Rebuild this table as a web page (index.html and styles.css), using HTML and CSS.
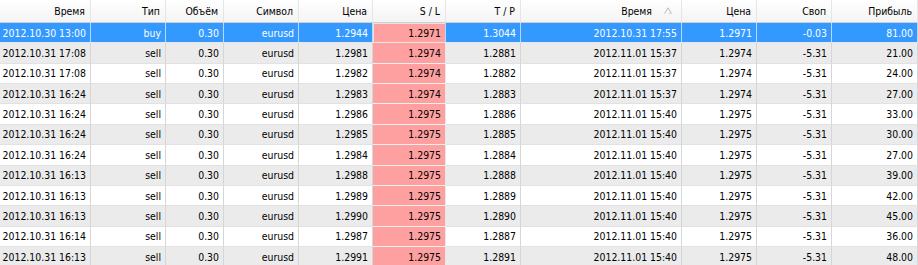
FILE: index.html
```html
<!DOCTYPE html>
<html lang="ru">
<head>
<meta charset="utf-8">
<title>Trades</title>
<link rel="stylesheet" href="styles.css">
</head>
<body>
<div class="table">
  <div class="row head">
    <div class="cell">Время</div>
    <div class="cell">Тип</div>
    <div class="cell">Объём</div>
    <div class="cell">Символ</div>
    <div class="cell">Цена</div>
    <div class="cell">S / L</div>
    <div class="cell">T / P</div>
    <div class="cell sorted">Время<svg class="sort" width="8" height="7" viewBox="0 0 8 7"><polyline points="0.5,6.5 4,0.8 7.5,6.5" fill="none" stroke="#b8b8b8" stroke-width="1"/><line x1="4.5" y1="6.5" x2="7.5" y2="6.5" stroke="#d8d8d8" stroke-width="1"/></svg></div>
    <div class="cell">Цена</div>
    <div class="cell">Своп</div>
    <div class="cell">Прибыль</div>
  </div>
  <div class="row selected">
    <div class="cell">2012.10.30 13:00</div><div class="cell">buy</div><div class="cell">0.30</div><div class="cell">eurusd</div><div class="cell">1.2944</div><div class="cell sl">1.2971</div><div class="cell">1.3044</div><div class="cell">2012.10.31 17:55</div><div class="cell">1.2971</div><div class="cell">-0.03</div><div class="cell">81.00</div>
  </div>
  <div class="row alt">
    <div class="cell">2012.10.31 17:08</div><div class="cell">sell</div><div class="cell">0.30</div><div class="cell">eurusd</div><div class="cell">1.2981</div><div class="cell sl">1.2974</div><div class="cell">1.2881</div><div class="cell">2012.11.01 15:37</div><div class="cell">1.2974</div><div class="cell">-5.31</div><div class="cell">21.00</div>
  </div>
  <div class="row">
    <div class="cell">2012.10.31 17:08</div><div class="cell">sell</div><div class="cell">0.30</div><div class="cell">eurusd</div><div class="cell">1.2982</div><div class="cell sl">1.2974</div><div class="cell">1.2882</div><div class="cell">2012.11.01 15:37</div><div class="cell">1.2974</div><div class="cell">-5.31</div><div class="cell">24.00</div>
  </div>
  <div class="row alt">
    <div class="cell">2012.10.31 16:24</div><div class="cell">sell</div><div class="cell">0.30</div><div class="cell">eurusd</div><div class="cell">1.2983</div><div class="cell sl">1.2974</div><div class="cell">1.2883</div><div class="cell">2012.11.01 15:37</div><div class="cell">1.2974</div><div class="cell">-5.31</div><div class="cell">27.00</div>
  </div>
  <div class="row">
    <div class="cell">2012.10.31 16:24</div><div class="cell">sell</div><div class="cell">0.30</div><div class="cell">eurusd</div><div class="cell">1.2986</div><div class="cell sl">1.2975</div><div class="cell">1.2886</div><div class="cell">2012.11.01 15:40</div><div class="cell">1.2975</div><div class="cell">-5.31</div><div class="cell">33.00</div>
  </div>
  <div class="row alt">
    <div class="cell">2012.10.31 16:24</div><div class="cell">sell</div><div class="cell">0.30</div><div class="cell">eurusd</div><div class="cell">1.2985</div><div class="cell sl">1.2975</div><div class="cell">1.2885</div><div class="cell">2012.11.01 15:40</div><div class="cell">1.2975</div><div class="cell">-5.31</div><div class="cell">30.00</div>
  </div>
  <div class="row">
    <div class="cell">2012.10.31 16:24</div><div class="cell">sell</div><div class="cell">0.30</div><div class="cell">eurusd</div><div class="cell">1.2984</div><div class="cell sl">1.2975</div><div class="cell">1.2884</div><div class="cell">2012.11.01 15:40</div><div class="cell">1.2975</div><div class="cell">-5.31</div><div class="cell">27.00</div>
  </div>
  <div class="row alt">
    <div class="cell">2012.10.31 16:13</div><div class="cell">sell</div><div class="cell">0.30</div><div class="cell">eurusd</div><div class="cell">1.2988</div><div class="cell sl">1.2975</div><div class="cell">1.2888</div><div class="cell">2012.11.01 15:40</div><div class="cell">1.2975</div><div class="cell">-5.31</div><div class="cell">39.00</div>
  </div>
  <div class="row">
    <div class="cell">2012.10.31 16:13</div><div class="cell">sell</div><div class="cell">0.30</div><div class="cell">eurusd</div><div class="cell">1.2989</div><div class="cell sl">1.2975</div><div class="cell">1.2889</div><div class="cell">2012.11.01 15:40</div><div class="cell">1.2975</div><div class="cell">-5.31</div><div class="cell">42.00</div>
  </div>
  <div class="row alt">
    <div class="cell">2012.10.31 16:13</div><div class="cell">sell</div><div class="cell">0.30</div><div class="cell">eurusd</div><div class="cell">1.2990</div><div class="cell sl">1.2975</div><div class="cell">1.2890</div><div class="cell">2012.11.01 15:40</div><div class="cell">1.2975</div><div class="cell">-5.31</div><div class="cell">45.00</div>
  </div>
  <div class="row">
    <div class="cell">2012.10.31 16:14</div><div class="cell">sell</div><div class="cell">0.30</div><div class="cell">eurusd</div><div class="cell">1.2987</div><div class="cell sl">1.2975</div><div class="cell">1.2887</div><div class="cell">2012.11.01 15:40</div><div class="cell">1.2975</div><div class="cell">-5.31</div><div class="cell">36.00</div>
  </div>
  <div class="row alt">
    <div class="cell">2012.10.31 16:13</div><div class="cell">sell</div><div class="cell">0.30</div><div class="cell">eurusd</div><div class="cell">1.2991</div><div class="cell sl">1.2975</div><div class="cell">1.2891</div><div class="cell">2012.11.01 15:40</div><div class="cell">1.2975</div><div class="cell">-5.31</div><div class="cell">48.00</div>
  </div>
</div>
</body>
</html>
```

FILE: styles.css
```css
html, body {
  margin: 0;
  padding: 0;
  background: #ffffff;
  overflow: hidden;
}
.table {
  width: 918px;
  display: flex;
  flex-direction: column;
  font-family: "DejaVu Sans Condensed", "DejaVu Sans", sans-serif;
  font-stretch: condensed;
  font-size: 10.4px;
  color: #000000;
}
.row {
  display: grid;
  grid-template-columns: 91px 75px 58px 75px 74px 73px 75px 161px 75px 75px 86px;
  height: 20.36px;
  background: #ffffff;
}
.row.alt {
  background: #ebebeb;
}
.row.selected {
  background: #3399ff;
  color: #ffffff;
}
.cell {
  box-sizing: border-box;
  border-right: 1px solid #d6d6d6;
  border-bottom: 1px solid #e2e2e2;
  padding-right: 4px;
  display: flex;
  align-items: center;
  justify-content: flex-end;
  white-space: nowrap;
  overflow: hidden;
}
.row.selected .cell {
  border-right-color: #b9d9f7;
  border-bottom-color: #e8e8e8;
}
.cell.sl {
  background: #ffa0a0;
  color: #000000;
  border-right-color: #e9e9e9;
  border-bottom-color: #f0f0f0;
}
.row.selected .cell.sl {
  box-shadow: inset 1px 0 0 #e4e4e4, inset 0 1px 0 #e4e4e4;
}
.head {
  height: 23px;
  background: linear-gradient(#ffffff, #f3f3f3);
}
.head .cell {
  border-right-color: #e6e6e6;
  border-bottom: 1px solid #cfcfcf;
  padding-right: 5px;
}
.head .cell.sorted {
  padding-right: 9px;
}
.sort {
  margin-left: 12px;
  margin-bottom: 1px;
}
```
